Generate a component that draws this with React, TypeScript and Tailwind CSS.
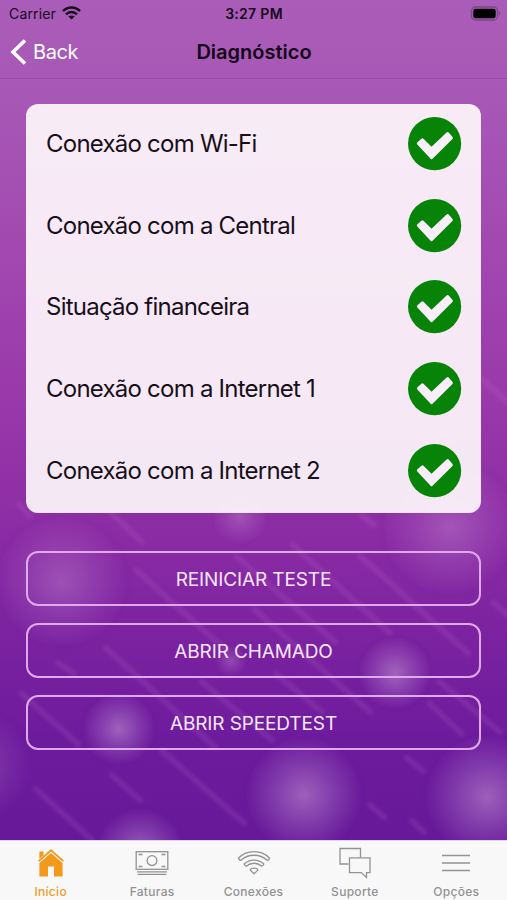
const checks = [
  "Conexão com Wi-Fi",
  "Conexão com a Central",
  "Situação financeira",
  "Conexão com a Internet 1",
  "Conexão com a Internet 2",
];

const actions = ["REINICIAR TESTE", "ABRIR CHAMADO", "ABRIR SPEEDTEST"];

const bubbles = [
  { cx: 62, cy: 582, r: 74, opacity: 0.65 },
  { cx: 240, cy: 517, r: 31, opacity: 0.6 },
  { cx: 450, cy: 528, r: 76, opacity: 0.65 },
  { cx: 119, cy: 729, r: 41, opacity: 1 },
  { cx: 395, cy: 673, r: 41, opacity: 1 },
  { cx: 231, cy: 661, r: 18, opacity: 0.6 },
  { cx: 304, cy: 795, r: 66, opacity: 1 },
  { cx: 487, cy: 797, r: 70, opacity: 1 },
  { cx: 140, cy: 852, r: 50, opacity: 1 },
  { cx: -25, cy: 765, r: 64, opacity: 0.5 },
];

const streaks = [
  [112, 514, 142, 542], [136, 570, 226, 650], [106, 648, 215, 747],
  [58, 663, 74, 674], [22, 694, 78, 744], [162, 751, 244, 823],
  [112, 775, 140, 800], [36, 789, 92, 840], [236, 556, 335, 642],
  [293, 545, 390, 633], [360, 556, 468, 653], [202, 682, 272, 740],
  [255, 610, 370, 712], [276, 674, 322, 712], [430, 704, 462, 734],
  [440, 682, 500, 732], [407, 758, 423, 771], [370, 805, 384, 817],
  [412, 821, 424, 832], [362, 516, 374, 525], [494, 603, 515, 622],
  [482, 379, 515, 409], [19, 504, 30, 516],
];

function Backdrop() {
  return (
    <svg className="absolute inset-0 -z-10" width="507" height="840" viewBox="0 0 507 840">
      <defs>
        <linearGradient id="sky" x1="0" y1="0" x2="0" y2="1">
          <stop offset="0" stopColor="#aa5db8" />
          <stop offset="0.12" stopColor="#a757b6" />
          <stop offset="0.3" stopColor="#a248b0" />
          <stop offset="0.48" stopColor="#9938aa" />
          <stop offset="0.62" stopColor="#8d2da5" />
          <stop offset="0.76" stopColor="#7b22a0" />
          <stop offset="0.88" stopColor="#6d1b9d" />
          <stop offset="1" stopColor="#671999" />
        </linearGradient>
        <radialGradient id="glow">
          <stop offset="0" stopColor="#d9b8e0" stopOpacity="0.45" />
          <stop offset="0.35" stopColor="#d3ade0" stopOpacity="0.28" />
          <stop offset="0.65" stopColor="#c9a0db" stopOpacity="0.13" />
          <stop offset="0.84" stopColor="#c9a0db" stopOpacity="0.02" />
          <stop offset="0.87" stopColor="#4a1280" stopOpacity="0.07" />
          <stop offset="1" stopColor="#4a1280" stopOpacity="0" />
        </radialGradient>
        <filter id="soft" x="-10%" y="-10%" width="120%" height="120%">
          <feGaussianBlur stdDeviation="1.6" />
        </filter>
      </defs>
      <rect width="507" height="840" fill="url(#sky)" />
      <g filter="url(#soft)" stroke="#c070cc" strokeOpacity="0.16" strokeWidth="6" strokeLinecap="round">
        {streaks.map(([x1, y1, x2, y2]) => (
          <line key={`${x1}-${y1}`} x1={x1} y1={y1} x2={x2} y2={y2} />
        ))}
      </g>
      {bubbles.map((b) => (
        <circle key={`${b.cx}-${b.cy}`} cx={b.cx} cy={b.cy} r={b.r} fill="url(#glow)" opacity={b.opacity} />
      ))}
    </svg>
  );
}

function StatusBar() {
  return (
    <div className="grid h-[27px] grid-cols-3 items-center pr-[6px] pl-[9px] text-[#160a1a]">
      <div className="flex items-center gap-[6px]">
        <span className="text-[14px] tracking-[0.15px]">Carrier</span>
        <svg className="-mt-[2px]" width="19" height="14" viewBox="0 0 19 14" fill="none" stroke="currentColor" strokeWidth="2.5">
          <path d="M1 5.2C5.8 0.4 13.2 0.4 18 5.2" />
          <path d="M4 8.4C7.1 5.3 11.9 5.3 15 8.4" />
          <path d="M9.5 13.5L6.4 10.6C8.2 9 10.8 9 12.6 10.6Z" fill="currentColor" stroke="none" />
        </svg>
      </div>
      <span className="-ml-[2px] text-center text-[14px] font-semibold tracking-[0.3px]">3:27 PM</span>
      <svg className="-mt-[1px] justify-self-end" width="31" height="15" viewBox="0 0 31 15">
        <rect x="1.5" y="1" width="26" height="13" rx="3.8" fill="none" stroke="#7c4688" strokeWidth="1.3" />
        <rect x="3.3" y="2.8" width="22.4" height="9.4" rx="2.2" fill="#000" />
        <path d="M29 5.2C30.7 6 30.7 9 29 9.8Z" fill="#7c4688" />
      </svg>
    </div>
  );
}

function NavBar() {
  return (
    <header className="grid h-[52px] grid-cols-3 items-center border-b border-[#984ca8] pb-[2px] pl-[10px]">
      <button className="flex items-center gap-[6px] text-left text-[20px] tracking-[-0.4px] text-white">
        <svg width="17" height="26" viewBox="0 0 17 26" fill="none" stroke="currentColor" strokeWidth="3.6">
          <path d="M15 1.5L3 13L15 24.5" />
        </svg>
        Back
      </button>
      <h1 className="-ml-[9px] text-center text-[20px] font-semibold text-[#120416]">Diagnóstico</h1>
    </header>
  );
}

function CheckBadge() {
  return (
    <svg width="54" height="54" viewBox="0 0 54 54">
      <circle cx="26.6" cy="26.6" r="26.6" fill="#078407" />
      <path
        d="M10.4 26.4L14.4 22.8L23.5 31.8L39.6 16.5L43.4 20.9L23.5 40.6Z"
        fill="#f9effa"
        stroke="#f9effa"
        strokeWidth="3"
        strokeLinejoin="round"
      />
    </svg>
  );
}

function HomeIcon() {
  return (
    <svg width="30" height="30" viewBox="0 0 30 30" fill="#f39a1d">
      <path d="M3.4 3.4H7.6V7.2L3.4 10.8Z" />
      <path d="M15 1L28 12.4L26.7 13.8L15 3.6L3.3 13.8L2 12.4Z" />
      <path d="M15 5L26.6 15V28.4H18V18.5H12V28.4H3.4V15Z" />
    </svg>
  );
}

function CashIcon() {
  return (
    <svg width="34" height="26" viewBox="0 0 34 26" fill="none" stroke="#929292" strokeWidth="1.3">
      <rect x="1.2" y="1.7" width="31.6" height="17.6" />
      <circle cx="17" cy="10.6" r="4.9" />
      <path d="M3.5 4.5H7.5M26.5 4.5H30.5M3.5 16.5H7.5M26.5 16.5H30.5" />
      <path d="M2 21.8H32M2.6 24.3H31.4" />
    </svg>
  );
}

function WifiIcon() {
  return (
    <svg className="ml-[1px]" width="34" height="26" viewBox="0 0 34 26" fill="none" stroke="#929292" strokeWidth="1.3" strokeLinejoin="round">
      <path d="M1.6 8C10-.4 24-.4 32.4 8C33 8.6 30.8 10.8 30.1 10.2C22.9 3.6 11.1 3.6 3.9 10.2C3.2 10.8 1 8.6 1.6 8Z" />
      <path d="M7.4 13.8C12.6 8.8 21.4 8.8 26.6 13.8C27.2 14.4 25 16.6 24.4 16C20.3 12.3 13.7 12.3 9.6 16C9 16.6 6.8 14.4 7.4 13.8Z" />
      <path d="M17 23.8L13.2 20.1C13.4 17.4 20.6 17.4 20.8 20.1Z" />
    </svg>
  );
}

function ChatIcon() {
  return (
    <svg width="32" height="32" viewBox="0 0 32 32" fill="none" stroke="#929292" strokeWidth="1.3">
      <path d="M9.5 17H1V1.5H21.5V10.5" />
      <path d="M10.5 10.8H31V25.6H27.5V30.5L22.3 25.6H10.5Z" />
    </svg>
  );
}

function MenuIcon() {
  return (
    <svg width="28" height="20" viewBox="0 0 28 20" stroke="#929292" strokeWidth="1.3">
      <path d="M0 2.5H28M0 10H28M0 17.5H28" />
    </svg>
  );
}

const tabs = [
  { label: "Início", icon: HomeIcon, color: "text-[#f39a1d]" },
  { label: "Faturas", icon: CashIcon, color: "text-[#929292]" },
  { label: "Conexões", icon: WifiIcon, color: "text-[#929292]" },
  { label: "Suporte", icon: ChatIcon, color: "text-[#929292]" },
  { label: "Opções", icon: MenuIcon, color: "text-[#929292]" },
];

export default function App() {
  return (
    <div className="relative isolate flex h-[900px] w-[507px] flex-col overflow-hidden font-[Inter,sans-serif]">
      <Backdrop />
      <StatusBar />
      <NavBar />
      <main className="flex-1 px-[26px] pt-[25px]">
        <ul className="h-[409px] rounded-[12px] bg-[#fdf6fb]/93">
          {checks.map((label) => (
            <li key={label} className="flex h-[81.8px] items-center justify-between pr-[19px] pb-[2px] pl-[20px]">
              <span className="text-[24px] tracking-[-0.77px] text-[#17101a]">{label}</span>
              <CheckBadge />
            </li>
          ))}
        </ul>
        <div className="mt-[38px] flex flex-col gap-[17px]">
          {actions.map((action) => (
            <button key={action} className="h-[55px] rounded-[12px] border-2 border-[#dfa9ec] pt-[3px] text-[19px] tracking-[-0.12px] text-[#f8e6fc]">
              {action}
            </button>
          ))}
        </div>
      </main>
      <nav className="grid h-[60px] grid-cols-5 border-t border-[#e5d5ec] bg-[#f8f8f8]">
        {tabs.map(({ label, icon: Icon, color }) => (
          <a key={label} className={`flex flex-col items-center text-[12px] font-medium tracking-[0.3px] ${color}`}>
            <span className="flex h-[43px] items-center">
              <Icon />
            </span>
            <span className="leading-[15px]">{label}</span>
          </a>
        ))}
      </nav>
    </div>
  );
}
